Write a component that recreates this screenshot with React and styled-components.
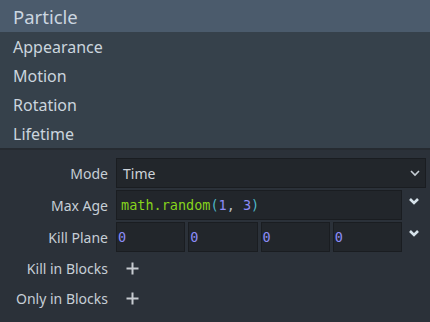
import React from "react";
import styled, { createGlobalStyle } from "styled-components";

const GlobalStyle = createGlobalStyle`
  body {
    margin: 0;
    background: #2b3139;
    font-family: "Noto Sans", "Open Sans", sans-serif;
  }
`;

const sections = ["Appearance", "Motion", "Rotation", "Lifetime"];

const Chevron = ({ bold }) => (
  <svg width="12" height="8" viewBox="0 0 12 8">
    <polyline
      points="2,2 6,6 10,2"
      fill="none"
      stroke={bold ? "#d6e2ea" : "#c5ccd3"}
      strokeWidth={bold ? 2.6 : 1.6}
    />
  </svg>
);

const Plus = () => (
  <svg width="13" height="13" viewBox="0 0 13 13">
    <path d="M6.5 0.5v12M0.5 6.5h12" stroke="#c8ccd1" strokeWidth="2" />
  </svg>
);

export default function App() {
  return (
    <Page>
      <GlobalStyle />
      <Header>Particle</Header>
      <SectionList>
        {sections.map((s) => (
          <SectionItem key={s}>{s}</SectionItem>
        ))}
      </SectionList>
      <Panel>
        <Row>
          <Label>Mode</Label>
          <Select>
            <span>Time</span>
            <Chevron />
          </Select>
        </Row>
        <Row>
          <Label>Max Age</Label>
          <FieldGroup>
            <CodeInput>
              <Fn>math.random</Fn>
              <Paren>(</Paren>
              <Num>1</Num>
              <Comma>, </Comma>
              <Num>3</Num>
              <Paren>)</Paren>
            </CodeInput>
            <DropButton>
              <Chevron bold />
            </DropButton>
          </FieldGroup>
        </Row>
        <Row>
          <Label>Kill Plane</Label>
          <FieldGroup>
            <Quad>
              {[0, 1, 2, 3].map((i) => (
                <CodeInput key={i} $tight>
                  <Num>0</Num>
                </CodeInput>
              ))}
            </Quad>
            <DropButton>
              <Chevron bold />
            </DropButton>
          </FieldGroup>
        </Row>
        <ListRow>
          <Label>Kill in Blocks</Label>
          <AddButton>
            <Plus />
          </AddButton>
        </ListRow>
        <ListRow>
          <Label>Only in Blocks</Label>
          <AddButton>
            <Plus />
          </AddButton>
        </ListRow>
      </Panel>
    </Page>
  );
}

const Page = styled.div`
  width: 430px;
  height: 322px;
  overflow: hidden;
  background: #2b3139;
`;

const Header = styled.div`
  height: 32px;
  display: flex;
  align-items: center;
  padding-left: 13px;
  background: #4b5b6c;
  color: #cbd6e0;
  font-size: 18.5px;
`;

const SectionList = styled.div`
  background: #36414b;
  border-bottom: 2px solid #262b31;
`;

const SectionItem = styled.div`
  height: 29px;
  display: flex;
  align-items: center;
  padding-left: 13px;
  color: #cbd5de;
  font-size: 16px;
`;

const Panel = styled.div`
  padding: 8px 4px 0 0;
  display: flex;
  flex-direction: column;
  gap: 2px;
`;

const Row = styled.div`
  display: grid;
  grid-template-columns: 108px 1fr;
  column-gap: 8px;
  height: 30px;
  align-items: center;
`;

const ListRow = styled(Row)`
  height: 28px;
`;

const Label = styled.div`
  text-align: right;
  color: #c6ced6;
  font-size: 14px;
`;

const Select = styled.div`
  height: 30px;
  box-sizing: border-box;
  border: 1px solid #1a1d21;
  background: #22262b;
  display: flex;
  align-items: center;
  justify-content: space-between;
  padding: 0 4px 0 6px;
  color: #cdd3d9;
  font-size: 14px;
`;

const FieldGroup = styled.div`
  display: grid;
  grid-template-columns: 1fr 24px;
  height: 30px;
`;

const Quad = styled.div`
  display: grid;
  grid-template-columns: repeat(4, 1fr);
  gap: 3px;
`;

const CodeInput = styled.div`
  height: 30px;
  box-sizing: border-box;
  border: 1px solid #1a1d21;
  background: #22262b;
  display: flex;
  align-items: center;
  padding-left: ${(p) => (p.$tight ? "1px" : "4px")};
  font-family: "DejaVu Sans Mono", "Liberation Mono", monospace;
  font-size: 13.5px;
  white-space: pre;
`;

const Fn = styled.span`
  color: #86d41c;
`;

const Paren = styled.span`
  color: #4fb7c8;
`;

const Num = styled.span`
  color: #8c8cf7;
`;

const Comma = styled.span`
  color: #b8bec6;
`;

const DropButton = styled.div`
  display: flex;
  align-items: center;
  justify-content: center;
  padding-bottom: 8px;
`;

const AddButton = styled.div`
  display: flex;
  align-items: center;
  padding-left: 10px;
`;
